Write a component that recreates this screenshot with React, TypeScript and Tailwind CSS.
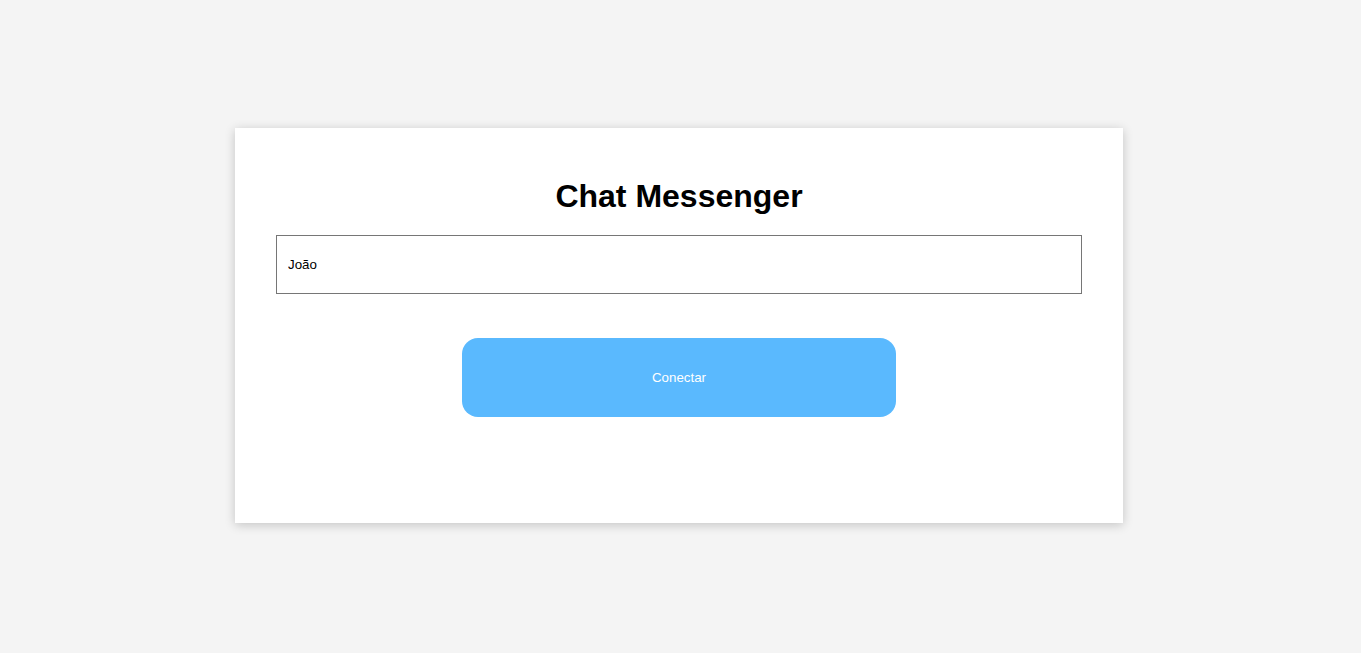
export default function App() {
  return (
    <div
      className="flex min-h-screen w-full items-center justify-center bg-[#f4f4f4] pr-[3px] pb-[2px]"
      style={{ fontFamily: '"Liberation Sans", Arial, sans-serif' }}
    >
      {/* login card */}
      <div className="flex h-[395px] w-[888px] flex-col items-center bg-white px-[41px] pt-[50px] shadow-[0_2px_10px_rgba(0,0,0,0.2)]">
        <h1 className="mb-[21px] text-[32px] leading-[36px] font-bold text-black">
          Chat Messenger
        </h1>
        <input
          type="text"
          defaultValue="João"
          className="h-[59px] w-full border border-[#767676] bg-white px-[11px] text-[13.33px] text-black outline-none"
        />
        <button className="mt-[44px] h-[79px] w-[434px] rounded-[16px] bg-[#5ab9fe] text-[13.33px] text-white">
          Conectar
        </button>
      </div>
    </div>
  );
}
